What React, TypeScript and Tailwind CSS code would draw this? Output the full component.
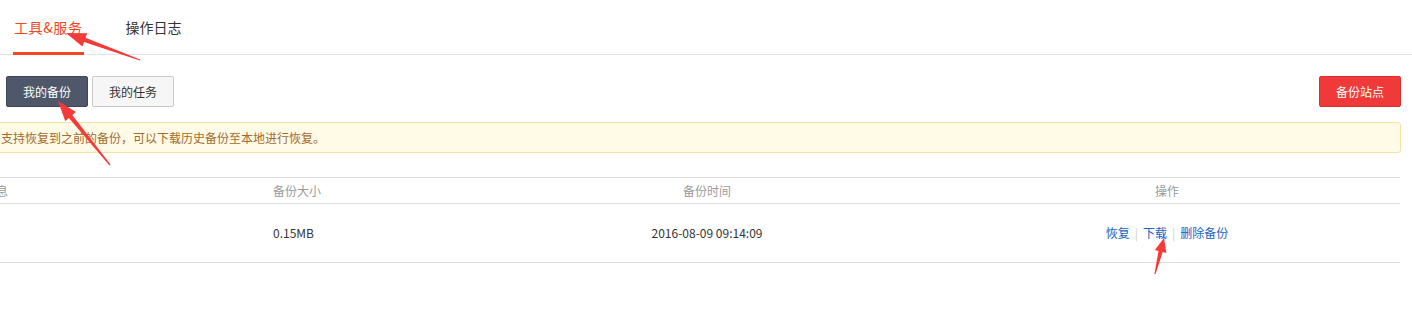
import React from 'react'

const FONT = '"Noto Sans CJK SC", "Liberation Sans", sans-serif'

type Arrow = { x1: number; y1: number; x2: number; y2: number; head: number; half: number }

const arrows: Arrow[] = [
  { x1: 140, y1: 60, x2: 66, y2: 33, head: 20, half: 7 },
  { x1: 110, y1: 165, x2: 58, y2: 101, head: 20, half: 7 },
  { x1: 1155, y1: 274, x2: 1164, y2: 238, head: 14, half: 6 },
]

function arrowPoints(a: Arrow) {
  const dx = a.x2 - a.x1
  const dy = a.y2 - a.y1
  const len = Math.hypot(dx, dy)
  const ux = dx / len
  const uy = dy / len
  const nx = -uy
  const ny = ux
  const bx = a.x2 - ux * a.head
  const by = a.y2 - uy * a.head
  const pts = [
    [a.x1 + nx * 0.6, a.y1 + ny * 0.6],
    [bx + nx * 2.2, by + ny * 2.2],
    [bx + nx * a.half, by + ny * a.half],
    [a.x2, a.y2],
    [bx - nx * a.half, by - ny * a.half],
    [bx - nx * 2.2, by - ny * 2.2],
    [a.x1 - nx * 0.6, a.y1 - ny * 0.6],
  ]
  return pts.map((p) => p.map((v) => v.toFixed(1)).join(',')).join(' ')
}

export default function App() {
  return (
    <div className="relative w-[1412px] h-[327px] bg-white overflow-hidden text-[12px] text-[#333]" style={{ fontFamily: FONT }}>
      {/* tabs */}
      <div className="flex items-end h-[55px] border-b border-[#e3e3e3] pl-[13px] gap-[42px]">
        <div className="relative h-full flex items-center px-px">
          <span className="text-[14px] text-[#f5461e] leading-none -mt-[1px] tracking-[0.6px]">工具&amp;服务</span>
          <div className="absolute left-0 right-0 -bottom-px h-[3px] bg-[#f5461e]" />
        </div>
        <div className="h-full flex items-center">
          <span className="text-[14px] text-[#333] leading-none -mt-[1px]">操作日志</span>
        </div>
      </div>

      {/* toolbar */}
      <div className="flex items-center justify-between mt-[21px] pl-[6px] pr-[11px]">
        <div className="flex gap-[4px]">
          <button className="w-[82px] h-[31px] rounded-[2px] bg-[#4f586a] border border-[#3f4757] text-white leading-none">
            我的备份
          </button>
          <button className="w-[82px] h-[31px] rounded-[2px] bg-[#f6f6f6] border border-[#c9c9c9] text-[#333] leading-none">
            我的任务
          </button>
        </div>
        <button className="w-[82px] h-[31px] rounded-[2px] bg-[#ef3a39] border border-[#d9302f] text-white leading-none">
          备份站点
        </button>
      </div>

      {/* notice */}
      <div className="mt-[15px] -ml-[10px] w-[1411px] h-[31px] flex items-center pl-[10px] bg-[#fffbe7] border border-[#f5e2a4] rounded-[3px] text-[#a46a2f] leading-none">
        支持恢复到之前的备份，可以下载历史备份至本地进行恢复。
      </div>

      {/* table */}
      <div className="mt-[24px] -ml-[50px] w-[1450px]">
        <div className="flex h-[27px] items-center border-t border-b border-[#dedede] text-[#9a9a9a]">
          <div className="w-[313px] pl-[10px]">备份信息</div>
          <div className="w-[217px] pl-[10px]">备份大小</div>
          <div className="w-[454px] text-center">备份时间</div>
          <div className="w-[466px] text-center">操作</div>
        </div>
        <div className="flex h-[59px] items-center border-b border-[#dedede] text-[#333]">
          <div className="w-[313px] pl-[10px]" />
          <div className="w-[217px] pl-[10px]">0.15MB</div>
          <div className="w-[454px] text-center">2016-08-09 09:14:09</div>
          <div className="w-[466px] flex justify-center items-center gap-[5px] text-[#1b62c4]">
            <a className="cursor-pointer">恢复</a>
            <span className="text-[#cfcfcf]">|</span>
            <a className="cursor-pointer">下载</a>
            <span className="text-[#cfcfcf]">|</span>
            <a className="cursor-pointer">删除备份</a>
          </div>
        </div>
      </div>

      {/* annotation arrows */}
      <svg className="absolute inset-0 pointer-events-none" width="1412" height="327">
        {arrows.map((a, i) => (
          <polygon key={i} points={arrowPoints(a)} fill="#f53a3a" />
        ))}
      </svg>
    </div>
  )
}
